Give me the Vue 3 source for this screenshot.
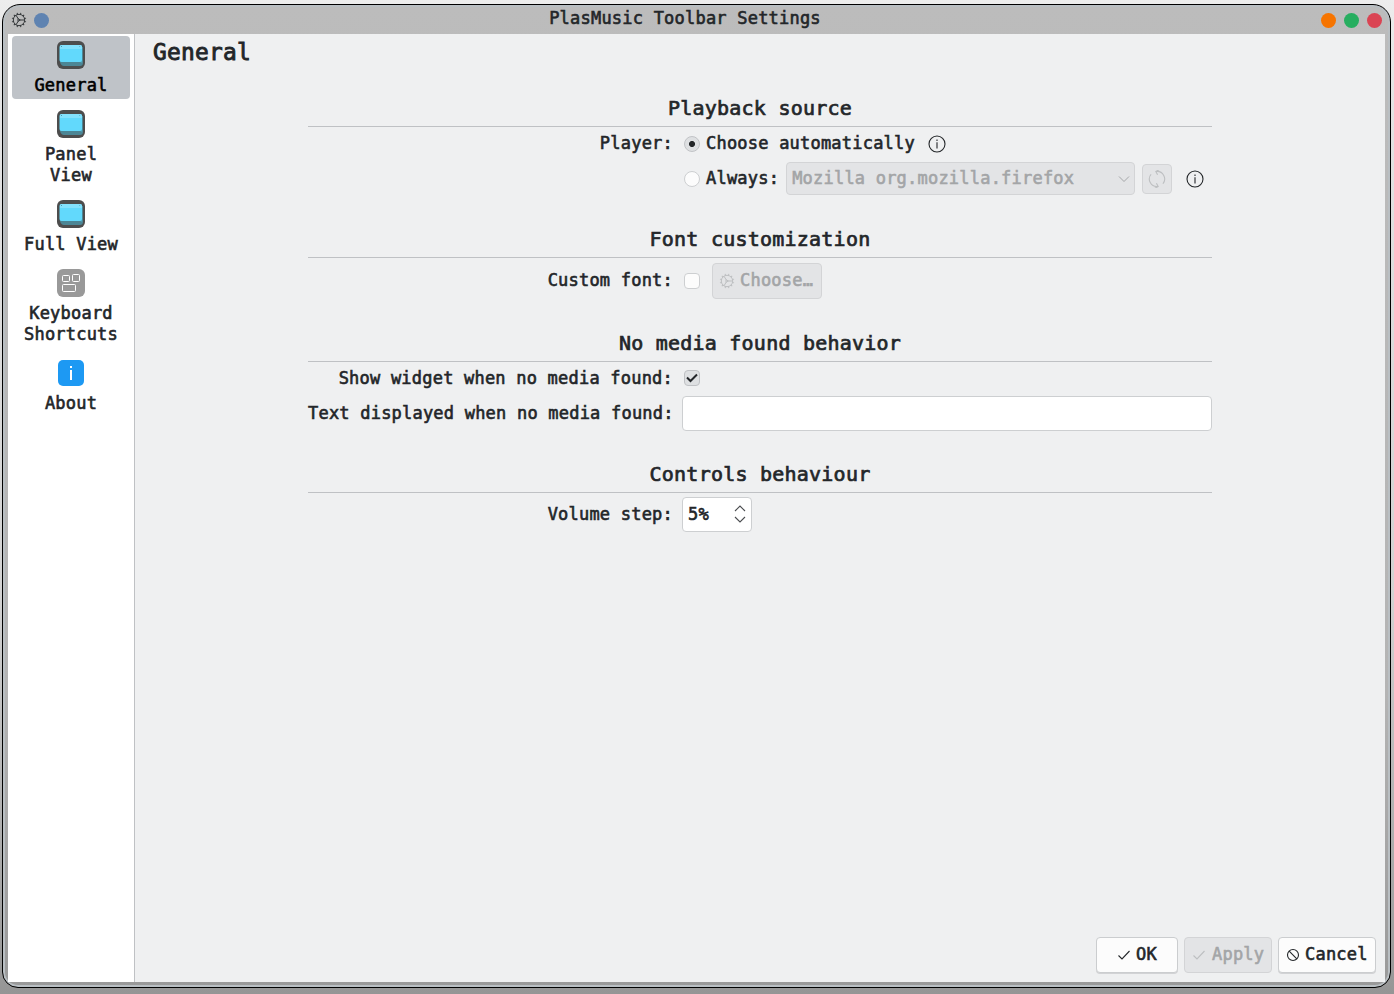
<script setup>
const pages = [
  { lines: ['General'], icon: 'key', active: true },
  { lines: ['Panel', 'View'], icon: 'key' },
  { lines: ['Full View'], icon: 'key' },
  { lines: ['Keyboard', 'Shortcuts'], icon: 'shortcuts' },
  { lines: ['About'], icon: 'about' },
]
const teeth = Array.from({ length: 12 }, (_, i) => i * 30 + 15)
</script>

<template>
  <div class="desktop">
    <div class="window">
      <header class="titlebar">
        <div class="tb-left">
          <svg width="16" height="16" viewBox="0 0 16 16" fill="none" stroke="#333638">
            <circle cx="8" cy="8" r="5.700" />
            <path v-for="a in teeth" :key="a" d="M8 2.300V.7" :transform="`rotate(${a} 8 8)`" />
            <path d="M9 8H13.500M7.200 6.800L5 3.200M7.200 9.200L5 12.800M7 6.600L9.200 8L7 9.400z" />
          </svg>
          <span class="dot blue"></span>
        </div>
        <div class="tb-title">PlasMusic Toolbar Settings</div>
        <div class="tb-right">
          <span class="dot orange"></span>
          <span class="dot green"></span>
          <span class="dot red"></span>
        </div>
      </header>

      <div class="body">
        <nav class="sidebar">
          <div v-for="p in pages" :key="p.lines[0]" class="page" :class="{ active: p.active }">
            <svg v-if="p.icon === 'key'" width="28" height="28" viewBox="0 0 28 28">
              <rect width="28" height="28" rx="6" fill="#4d4d4d" />
              <path d="M3 6h23v16q0 3-3 3H7q-3 0-4-4z" fill="#4c8695" />
              <path d="M25 6v16l-2-1V4z" fill="#50a0b4" />
              <rect x="2.500" y="4" width="22.500" height="17" rx="2" fill="#62d9fc" />
              <path d="M3 5.500Q3 4 4.500 4H23q2 0 2 1.500V8H3z" fill="#83e1fc" />
              <path d="M4 5.500h1M22.500 5.500h.6" stroke="#34778a" stroke-opacity=".7" />
            </svg>
            <svg v-else-if="p.icon === 'shortcuts'" width="28" height="28" viewBox="0 0 28 28" fill="none" stroke="#fff">
              <rect width="28" height="28" rx="6" fill="#999" stroke="none" />
              <rect x="5.500" y="6.500" width="7" height="6" rx="1" />
              <rect x="15.500" y="5.500" width="7" height="7" rx="1" />
              <rect x="5.500" y="15.500" width="13" height="7" rx="1" />
            </svg>
            <svg v-else width="28" height="28" viewBox="0 0 28 28">
              <rect x="1" y="1" width="26" height="26" rx="5" fill="#1d99f3" />
              <path d="M13 7h2v2h-2zM13 11h2v10h-2z" fill="#fff" />
            </svg>
            <div v-for="l in p.lines" :key="l" class="page-line">{{ l }}</div>
          </div>
        </nav>

        <main class="main">
          <h1>General</h1>
          <div class="form">
            <section>
              <h2>Playback source</h2>
              <div class="row source">
                <label>Player:</label>
                <div class="ctl">
                  <span class="radio on"></span>
                  <span>Choose automatically</span>
                  <svg class="info" width="18" height="18" viewBox="0 0 18 18" fill="none" stroke="#232629" stroke-width="1.100">
                    <circle cx="9" cy="9" r="8" /><path d="M9 4.500v1.500M9 7.200v6.300" />
                  </svg>
                </div>
              </div>
              <div class="row always">
                <label></label>
                <div class="ctl">
                  <span class="radio"></span>
                  <span>Always:</span>
                  <div class="combo off">
                    <span>Mozilla org.mozilla.firefox</span>
                    <svg width="12" height="8" viewBox="0 0 12 8" fill="none" stroke="#a5a7a9"><path d="M1 1.500L6 6.500L11 1.500" /></svg>
                  </div>
                  <div class="refresh off">
                    <svg width="18" height="18" viewBox="0 0 18 18" fill="none" stroke="#bdbfc1" stroke-width="1.100">
                      <path d="M6 16A7.600 7.600 0 0 1 6 2M6.500 12.500V16.200H2.800M12 2A7.600 7.600 0 0 1 12 16M11.500 5.500V1.800H15.200" transform="rotate(-28 9 9)" />
                    </svg>
                  </div>
                  <svg class="info end" width="18" height="18" viewBox="0 0 18 18" fill="none" stroke="#232629" stroke-width="1.100">
                    <circle cx="9" cy="9" r="8" /><path d="M9 4.500v1.500M9 7.200v6.300" />
                  </svg>
                </div>
              </div>
            </section>

            <section>
              <h2>Font customization</h2>
              <div class="row font">
                <label>Custom font:</label>
                <div class="ctl">
                  <span class="check"></span>
                  <div class="choose off">
                    <svg width="16" height="16" viewBox="0 0 16 16" fill="none" stroke="#bdbfc1">
                      <circle cx="8" cy="8" r="5.700" />
                      <path v-for="a in teeth" :key="a" d="M8 2.300V.7" :transform="`rotate(${a} 8 8)`" />
                      <path d="M9 8H13.500M7.200 6.800L5 3.200M7.200 9.200L5 12.800M7 6.600L9.200 8L7 9.400z" />
                    </svg>
                    <span>Choose…</span>
                  </div>
                </div>
              </div>
            </section>

            <section>
              <h2>No media found behavior</h2>
              <div class="row show">
                <label>Show widget when no media found:</label>
                <div class="ctl">
                  <span class="check on">
                    <svg width="14" height="14" viewBox="0 0 14 14" fill="none" stroke="#232629" stroke-width="2"><path d="M2 6.500L5.500 10L12 3.500" /></svg>
                  </span>
                </div>
              </div>
              <div class="row text">
                <label>Text displayed when no media found:</label>
                <div class="ctl"><div class="field"></div></div>
              </div>
            </section>

            <section>
              <h2>Controls behaviour</h2>
              <div class="row step">
                <label>Volume step:</label>
                <div class="ctl">
                  <div class="spin">
                    <span>5%</span>
                    <svg width="12" height="20" viewBox="0 0 12 20" fill="none" stroke="#4b4d50" stroke-width="1.100"><path d="M1 7L6 2L11 7M1 13L6 18L11 13" /></svg>
                  </div>
                </div>
              </div>
            </section>
          </div>

          <footer>
            <div class="btn ok">
              <svg width="14" height="12" viewBox="0 0 14 12" fill="none" stroke="#232629" stroke-width="1.100"><path d="M1.500 6.500L5 10L12.500 2" /></svg>
              <span>OK</span>
            </div>
            <div class="btn apply off">
              <svg width="14" height="12" viewBox="0 0 14 12" fill="none" stroke="#bdbfc1" stroke-width="1.100"><path d="M1.500 6.500L5 10L12.500 2" /></svg>
              <span>Apply</span>
            </div>
            <div class="btn cancel">
              <svg width="14" height="14" viewBox="0 0 14 14" fill="none" stroke="#232629" stroke-width="1.100"><circle cx="7" cy="7" r="5.500" /><path d="M3.200 3.200L10.800 10.800" /></svg>
              <span>Cancel</span>
            </div>
          </footer>
        </main>
      </div>
    </div>
  </div>
</template>

<style>
html, body { margin: 0; overflow: hidden; }
</style>

<style scoped>
* { box-sizing: border-box; }
svg { display: block; flex: none; }
.desktop {
  width: 1394px;
  height: 994px;
  padding: 4px 3px 6px 2px;
  background: linear-gradient(#ededed 0, #e4e4e4 8%, #d2d2d2 60%, #999 98%, #959595);
  font-family: "DejaVu Sans Mono", monospace;
  font-size: 17px;
  letter-spacing: 0.213px;
  line-height: 21px;
  color: #232629;
  -webkit-text-stroke: 0.6px;
  white-space: pre;
}
.window {
  width: 1389px;
  height: 984px;
  border: 1px solid #000;
  border-radius: 18px 18px 16px 16px;
  background: linear-gradient(#bcbcbc 0, #b4b4b4 70%, #999 100%);
  box-shadow: inset 0 0 0 2px #b9bfc3;
  padding: 0 5px 5px;
}
.titlebar { height: 29px; display: grid; grid-template-columns: 1fr auto 1fr; }
.tb-left { display: flex; gap: 7px; padding: 7px 0 0 3px; }
.tb-right { display: flex; justify-content: flex-end; gap: 8px; padding: 8px 3px 0 0; }
.tb-title { padding-top: 3px; margin-left: -23px; }
.dot { width: 15px; height: 15px; border-radius: 50%; }
.tb-left .dot { margin-top: 1px; }
.blue { background: #5f83b1; }
.orange { background: #f67400; }
.green { background: #27ae60; }
.red { background: #da4453; }
.body { height: 948px; display: flex; background: #eff0f1; }
.sidebar {
  width: 127px;
  background: #fff;
  border-right: 1px solid #bfc1c4;
  padding: 2px 4px;
  display: flex;
  flex-direction: column;
  gap: 6px;
}
.page { padding: 5px 0 3px; border-radius: 4px; display: flex; flex-direction: column; align-items: center; }
.page svg { margin-bottom: 6px; }
.page-line { height: 21px; }
.active { background: #bfc3c8; color: #000; }
.main { flex: 1; display: flex; flex-direction: column; padding: 0 9px 9px 18px; }
h1 { margin: 3px 0 23px; font-size: 22.8px; line-height: 30px; font-weight: 400; letter-spacing: 0.28px; -webkit-text-stroke: 0.9px; }
.form { width: 904px; margin-left: 155px; }
section { margin-bottom: 26px; }
h2 {
  margin: 0;
  height: 37px;
  padding-top: 1px;
  border-bottom: 1px solid #bfc1c4;
  text-align: center;
  font-size: 20px;
  font-weight: 400;
  line-height: 35px;
  letter-spacing: 0.23px;
  -webkit-text-stroke: 0.7px;
}
.row { display: grid; grid-template-columns: 365px 530px; gap: 9px; align-items: center; }
.row label { text-align: right; }
.ctl { display: flex; align-items: center; height: 100%; }
.source { height: 33px; }
.always { height: 33px; margin-top: 2px; }
.font { height: 36px; margin-top: 5px; }
.font label { margin-top: -1px; }
.show { height: 32px; }
.text { height: 35px; margin: 2px 0 -1px; }
.step { height: 35px; margin-top: 4px; }
.radio, .check { width: 16px; height: 16px; margin: 1px 6px 0 2px; flex: none; background: #fcfcfc; border: 1px solid #cdcfd1; }
.radio { border-radius: 50%; }
.radio.on { background: radial-gradient(circle, #232629 2.7px, #dee0e2 3.3px); border-color: #c1c3c6; }
.check { border-radius: 4px; margin-top: -1px; }
.check.on { background: #dee0e2; border-color: #bfc1c4; }
.info { margin: 1px 0 0 13px; }
.info.end { margin-left: 14px; }
.off { background: #e3e4e6; border: 1px solid #d3d4d6; color: #a3a5a7; }
.combo { width: 349px; height: 33px; margin-left: 7px; padding: 0 4px 0 5px; border-radius: 4px; display: flex; align-items: center; justify-content: space-between; }
.refresh { width: 30px; height: 30px; margin: 1px 0 0 7px; border-radius: 4px; display: flex; align-items: center; justify-content: center; }
.choose { width: 110px; height: 36px; margin-left: 6px; padding-left: 6px; border-radius: 4px; display: flex; align-items: center; gap: 5px; }
.choose span { margin-top: -1px; }
.field { width: 530px; height: 35px; background: #fff; border: 1px solid #cdcfd1; border-radius: 4px; }
.spin { width: 70px; height: 35px; background: #fff; border: 1px solid #cdcfd1; border-radius: 4px; display: flex; align-items: center; justify-content: space-between; padding: 0 5px; }
.spin svg { margin-top: -2px; }
footer { margin-top: auto; display: flex; justify-content: flex-end; gap: 6px; }
.btn { height: 36px; border: 1px solid #cbcdcf; border-radius: 4px; background: #fcfcfc; box-shadow: 0 1px 0 #d2d3d5; display: flex; align-items: center; gap: 5px; }
.btn span { margin-top: -1px; }
.btn.off { background: #e3e4e6; border-color: #d3d4d6; box-shadow: none; }
.ok { width: 82px; padding-left: 20px; }
.apply { width: 88px; padding-left: 7px; gap: 6px; }
.cancel { width: 98px; padding-left: 7px; }
</style>
